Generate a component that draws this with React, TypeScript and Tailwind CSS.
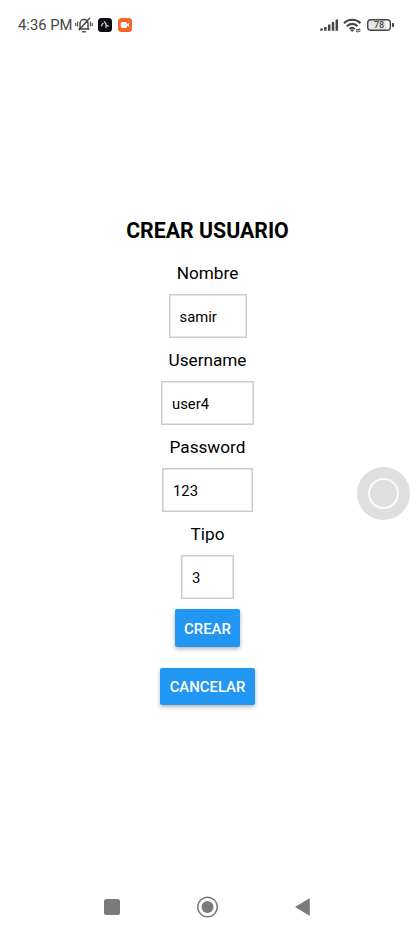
import React from 'react';

function StatusBar() {
  return (
    <header className="flex h-[50px] shrink-0 items-center pl-[18px] pr-[22px] text-[#454545]">
      <span className="w-[57px] whitespace-nowrap text-[14.8px] leading-5">4:36 PM</span>
      <svg className="h-[16px] w-[18px]" viewBox="0 0 18 16" fill="none" stroke="currentColor" strokeWidth="1.4">
        <path d="M5 11.5V6.5a4 4 0 0 1 8 0v5M3.5 12h11M7.3 14.7h3.4M15 .8 3.8 13.2" />
        <path d="M2.6 4.5v5M.7 6v3M15.4 4.5v5M17.3 6v3" strokeWidth="1.1" />
      </svg>
      <svg className="ml-[5px] h-[14px] w-[14px]" viewBox="0 0 14 14">
        <rect width="14" height="14" rx="3.5" fill="#0c0c10" />
        <path d="M3.4 7.8 5 5.2M6.6 3.8 8 6.2V9.4M8.6 7.2l1.8 1" fill="none" stroke="#c8ccdc" strokeWidth="1.3" strokeLinecap="round" />
      </svg>
      <svg className="ml-[6px] h-[14px] w-[14px]" viewBox="0 0 14 14">
        <rect width="14" height="14" rx="3.5" fill="#fb632b" />
        <rect x="2.8" y="4" width="6.2" height="6" rx="1.2" fill="#fff" />
        <path d="m8.4 7 2.6-2.2v4.4z" fill="#fff" />
      </svg>
      <svg className="ml-auto h-[14px] w-[19px]" viewBox="0 0 19 14" fill="none" stroke="currentColor" strokeWidth="2.5">
        <path d="M1.5 10.4v2.4M5.4 8.9v3.9M9.2 6.4v6.4M13 4v8.8M16.8 1.4v11.4" />
      </svg>
      <svg className="ml-[4px] h-[15px] w-[19px]" viewBox="0 0 19 15" fill="none" stroke="currentColor" strokeWidth="2.2">
        <path d="M1 5.2a11.5 11.5 0 0 1 16.4 0M3.9 8.2a7.4 7.4 0 0 1 10.6 0M6.6 11a3.8 3.8 0 0 1 5.2 0" />
        <path d="m7 11.8 2.2 2.2 2.2-2.2z" fill="currentColor" stroke="none" />
        <path d="M13 11.7h4.3l-1.2-1.2M17.4 13.2h-4.2l1.2 1.2" strokeWidth="1" />
      </svg>
      <div className="ml-[5px] flex h-[12px] w-[24px] items-center justify-center rounded-[4px] bg-[linear-gradient(90deg,#e6e6e6_78%,#fff_78%)] text-[9px] font-medium leading-none shadow-[inset_0_0_0_1.4px_#454545]">
        78
      </div>
      <div className="ml-[1px] h-[4px] w-[2px] rounded-r-[1px] bg-[#454545]" />
    </header>
  );
}

function Field({ label, value, box }: { label: string; value: string; box: string }) {
  return (
    <div className="flex h-[87.1px] shrink-0 flex-col items-center">
      <div className="flex h-[43px] items-center whitespace-nowrap pt-[2px] text-[17.2px]">{label}</div>
      <div className={`flex h-[43.5px] items-center pl-[11px] pt-[2px] text-[14.8px] shadow-[inset_0_0_0_1.5px_#cccccc] ${box}`}>
        {value}
      </div>
    </div>
  );
}

function ActionButton({ label, size }: { label: string; size: string }) {
  return (
    <button className={`flex h-[37.5px] shrink-0 items-center justify-center whitespace-nowrap rounded-[2px] bg-[#2196f3] pt-[2px] text-[14.9px] font-medium text-white shadow-[0_2px_4px_rgba(0,0,0,0.3)] ${size}`}>
      {label}
    </button>
  );
}

export default function App() {
  return (
    <div className="relative flex h-[931px] w-[416px] flex-col overflow-hidden bg-white font-['Roboto',sans-serif] text-black">
      <StatusBar />
      <main className="flex flex-1 flex-col items-center pr-[1px] pt-[168px]">
        <h1 className="h-[33.2px] whitespace-nowrap text-[21.3px] font-bold leading-[26px]">CREAR USUARIO</h1>
        <Field label="Nombre" value="samir" box="w-[78px]" />
        <Field label="Username" value="user4" box="w-[93px]" />
        <Field label="Password" value="123" box="w-[91px]" />
        <Field label="Tipo" value="3" box="w-[53px]" />
        <div className="mt-[9.5px] flex flex-col items-center gap-[21px]">
          <ActionButton label="CREAR" size="w-[65px]" />
          <ActionButton label="CANCELAR" size="w-[95px]" />
        </div>
      </main>
      <nav className="flex h-[49px] shrink-0 items-center justify-between pl-[104px] pr-[106px]">
        <div className="h-[16px] w-[16px] rounded-[2.5px] bg-[#7b7b7b]" />
        <svg className="h-[22px] w-[22px]" viewBox="0 0 22 22">
          <circle cx="10.5" cy="11" r="9.8" fill="none" stroke="#7b7b7b" strokeWidth="1.5" />
          <circle cx="10.5" cy="11" r="6" fill="#7b7b7b" />
        </svg>
        <svg className="h-[18px] w-[15px]" viewBox="0 0 15 18">
          <path d="M.8 8.4 14 .5q.8-.3.8.5v16q0 .8-.8.5L.8 9.6q-.8-.6 0-1.2z" fill="#7b7b7b" />
        </svg>
      </nav>
      <div className="absolute left-[357px] top-[467px] flex h-[53px] w-[53px] items-center justify-center rounded-full bg-[#dfdfdf]">
        <div className="h-[31px] w-[31px] rounded-full border-2 border-[#fafafa]" />
      </div>
    </div>
  );
}
